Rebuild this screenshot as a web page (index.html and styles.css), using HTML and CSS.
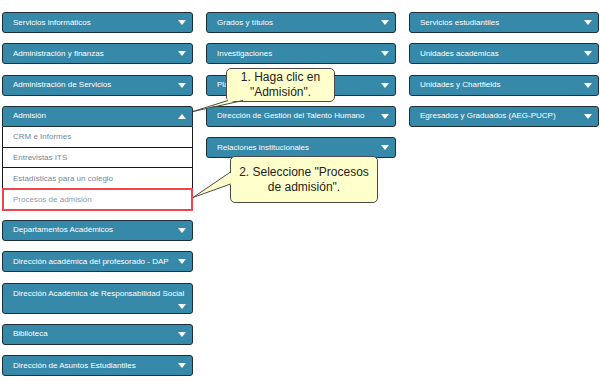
FILE: index.html
```html
<!DOCTYPE html>
<html lang="es">
<head>
<meta charset="utf-8">
<title>Menú</title>
<link rel="stylesheet" href="styles.css">
</head>
<body>
<div class="grid">
  <div class="col">
    <div class="btn"><span class="lbl">Servicios informáticos</span><i class="arr"></i></div>
    <div class="btn"><span class="lbl">Administración y finanzas</span><i class="arr"></i></div>
    <div class="btn"><span class="lbl">Administración de Servicios</span><i class="arr"></i></div>
    <div class="group">
      <div class="btn open"><span class="lbl">Admisión</span><i class="arr up"></i></div>
      <ul class="sub">
        <li>CRM e Informes</li>
        <li>Entrevistas ITS</li>
        <li>Estadísticas para un colegio</li>
        <li class="hl">Procesos de admisión</li>
      </ul>
    </div>
    <div class="btn"><span class="lbl">Departamentos Académicos</span><i class="arr"></i></div>
    <div class="btn"><span class="lbl">Dirección académica del profesorado - DAP</span><i class="arr"></i></div>
    <div class="btn tall"><span class="lbl">Dirección Académica de Responsabilidad Social</span><i class="arr"></i></div>
    <div class="btn"><span class="lbl">Biblioteca</span><i class="arr"></i></div>
    <div class="btn"><span class="lbl">Dirección de Asuntos Estudiantiles</span><i class="arr"></i></div>
  </div>
  <div class="col">
    <div class="btn"><span class="lbl">Grados y títulos</span><i class="arr"></i></div>
    <div class="btn"><span class="lbl">Investigaciones</span><i class="arr"></i></div>
    <div class="btn"><span class="lbl">Planificación</span><i class="arr"></i></div>
    <div class="btn"><span class="lbl">Dirección de Gestión del Talento Humano</span><i class="arr"></i></div>
    <div class="btn"><span class="lbl">Relaciones institucionales</span><i class="arr"></i></div>
  </div>
  <div class="col">
    <div class="btn"><span class="lbl">Servicios estudiantiles</span><i class="arr"></i></div>
    <div class="btn"><span class="lbl">Unidades académicas</span><i class="arr"></i></div>
    <div class="btn"><span class="lbl">Unidades y Chartfields</span><i class="arr"></i></div>
    <div class="btn"><span class="lbl">Egresados y Graduados (AEG-PUCP)</span><i class="arr"></i></div>
  </div>
</div>

<div class="callout c1">1. Haga clic en<br>"Admisión".</div>
<div class="callout c2">2. Seleccione "Procesos<br>de admisión".</div>
<svg class="pointers" width="600" height="388" viewBox="0 0 600 388" aria-hidden="true">
  <polygon points="193,111.5 228,99 243,99" fill="#ffffcc"/>
  <polyline points="228,100.5 193,111.5 243,100.5" fill="none" stroke="#4a4a4a" stroke-width="1"/>
  <polygon points="193,197.5 232,172 232,184" fill="#ffffcc"/>
  <polyline points="230.5,172 193,197.5 230.5,184" fill="none" stroke="#4a4a4a" stroke-width="1"/>
</svg>
</body>
</html>
```
FILE: styles.css
```css
* { box-sizing: border-box; }
html, body { margin: 0; padding: 0; background: #ffffff; }
body {
  width: 600px;
  height: 388px;
  overflow: hidden;
  position: relative;
  font-family: "Liberation Sans", Arial, sans-serif;
}
.grid {
  display: grid;
  grid-template-columns: 191px 190px 190px;
  column-gap: 13px;
  padding: 12px 0 0 2px;
  align-items: start;
}
.col {
  display: flex;
  flex-direction: column;
  gap: 10.3px;
}
.btn {
  height: 21px;
  background: #3789a9;
  border: 1px solid #1d2f38;
  border-radius: 3px;
  color: #ffffff;
  font-size: 8px;
  display: flex;
  align-items: center;
  justify-content: space-between;
  padding: 0 6px 0 10px;
  white-space: nowrap;
}
.btn .lbl { line-height: 10px; }
.btn.open {
  border-radius: 3px 3px 0 0;
}
.btn.tall {
  height: 31px;
  flex-direction: column;
  align-items: stretch;
  justify-content: center;
  padding-top: 1px;
}
.btn.tall .arr {
  align-self: flex-end;
  margin-top: 5px;
}
.arr {
  display: block;
  width: 0;
  height: 0;
  border-left: 4px solid transparent;
  border-right: 4px solid transparent;
  border-top: 5px solid #ffffff;
}
.arr.up {
  border-top: 0;
  border-bottom: 5px solid #ffffff;
}
.sub {
  list-style: none;
  margin: 0;
  padding: 0;
  background: #ffffff;
  border-left: 1px solid #1a1a1a;
  border-right: 1px solid #1a1a1a;
}
.sub li {
  height: 20.7px;
  border-bottom: 1px solid #1a1a1a;
  font-size: 8px;
  color: #75879a;
  padding-left: 10px;
  display: flex;
  align-items: center;
}
.sub li.hl {
  border-bottom: 0;
  color: #8e9bab;
  outline: 2px solid #f0464b;
  outline-offset: -1px;
}
.callout {
  position: absolute;
  background: #ffffcc;
  border: 1px solid #4a4a4a;
  border-radius: 5px;
  color: #222222;
  font-size: 12px;
  line-height: 15px;
  text-align: center;
}
.c1 {
  left: 226px;
  top: 68px;
  width: 109px;
  height: 34px;
  padding-top: 1px;
}
.c2 {
  left: 230px;
  top: 156px;
  width: 148px;
  height: 47px;
  padding-top: 8px;
}
.pointers {
  position: absolute;
  left: 0;
  top: 0;
  pointer-events: none;
}
```
